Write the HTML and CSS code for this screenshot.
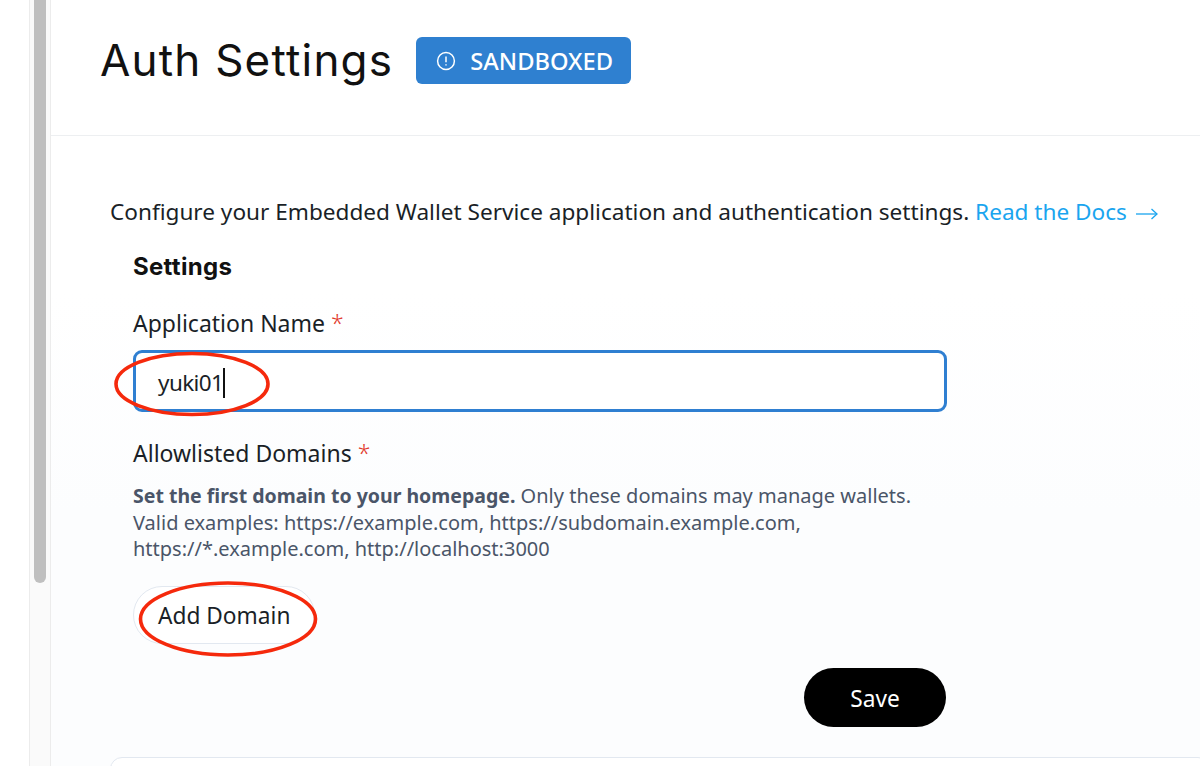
FILE: index.html
```html
<!DOCTYPE html>
<html lang="en">
<head>
<meta charset="utf-8">
<title>Auth Settings</title>
<link rel="stylesheet" href="styles.css">
</head>
<body>
<div class="app">
  <div class="gutter"></div>
  <div class="scrolltrack"><div class="thumb"></div></div>
  <main class="main">
    <header class="header">
      <h1 class="title">Auth Settings</h1>
      <span class="badge">
        <svg class="badge-icon" viewBox="0 0 20 20" fill="none" stroke="#fff" stroke-width="1.5"><circle cx="10" cy="10" r="8.4"/><path d="M10 5.4v5.8"/><path d="M10 13.2v1.4"/></svg>
        SANDBOXED
      </span>
    </header>
    <section class="content">
      <p class="intro">Configure your Embedded Wallet Service application and authentication settings. <a class="docs">Read the Docs<svg class="docs-arrow" viewBox="0 0 22 12" fill="none" stroke="#1aa5ef" stroke-width="1.3"><path d="M0 6h21"/><path d="M15.5 1l5.5 5-5.5 5"/></svg></a></p>
      <form class="form">
        <h2 class="section-title">Settings</h2>
        <label class="label">Application Name <span class="req">*</span></label>
        <div class="input"><span class="value">yuki01</span><span class="caret"></span></div>
        <label class="label label-domains">Allowlisted Domains <span class="req">*</span></label>
        <p class="help"><strong>Set the first domain to your homepage.</strong> Only these domains may manage wallets.<br>Valid examples: https://example.com, https://subdomain.example.com,<br>https://*.example.com, http://localhost:3000</p>
        <div class="add-row"><span class="btn-add">Add Domain</span></div>
        <div class="save-row"><span class="btn-save">Save</span></div>
      </form>
      <div class="next-card"></div>
    </section>
  </main>
</div>
<svg class="annot annot-name" viewBox="0 0 160 70" fill="none"><ellipse cx="80" cy="35" rx="76" ry="30.5" stroke="#f5290c" stroke-width="3.6"/></svg>
<svg class="annot annot-add" viewBox="0 0 184 78" fill="none"><ellipse cx="92" cy="39" rx="87.5" ry="36" stroke="#f5290c" stroke-width="3.6"/></svg>
</body>
</html>
```
FILE: styles.css
```css
* { box-sizing: border-box; }
html, body { margin: 0; height: 100%; overflow: hidden; background: #fff; }
body { font-family: "Noto Sans", sans-serif; color: #1a1f27; position: relative; }
.app { display: flex; height: 766px; }
.gutter { width: 29px; flex: none; background: #fff; }
.scrolltrack { width: 22px; flex: none; padding: 0 4px; background: #fafafa; border-left: 1px solid #ececec; border-right: 1px solid #ececec; }
.thumb { width: 12px; height: 583px; background: #bfbfbf; border-radius: 0 0 6px 6px; }
.main { flex: 1; min-width: 0; display: flex; flex-direction: column; }
.header { height: 136px; flex: none; display: flex; align-items: flex-start; padding: 37px 0 0 49px; border-bottom: 1px solid #edeff1; gap: 23px; }
.title { margin: 0; font-family: "Inter", sans-serif; font-weight: 400; font-size: 44px; line-height: 47px; color: #111; letter-spacing: 1.2px; }
.badge { display: flex; align-items: center; gap: 14px; height: 47px; padding: 0 18px 0 20px; background: #2f80d0; color: #fff; border-radius: 6px; font-size: 23.7px; font-weight: 500; }
.badge-icon { width: 20px; height: 20px; }
.content { flex: 1; padding: 60px 0 0 59px; background: linear-gradient(180deg, #fff 0, #fff 25%, #fcfdfe 60%, #fcfdfe 100%); overflow: hidden; }
.intro { margin: 0; font-size: 22.6px; line-height: 32px; white-space: nowrap; }
.docs { color: #1aa5ef; }
.docs-arrow { width: 22px; height: 12px; margin-left: 9px; }
.form { width: 814px; margin-left: 23px; }
.section-title { margin: 23px 0 0; font-family: "Inter", sans-serif; font-size: 24px; line-height: 32px; font-weight: 700; letter-spacing: 0.3px; color: #111; }
.label { display: block; margin-top: 24px; font-size: 23px; line-height: 32px; }
.req { color: #e23b2e; font-weight: 300; }
.input { height: 62px; margin-top: 11px; border: 3px solid #2f7fd1; border-radius: 9px; background: #fff; display: flex; align-items: center; padding: 3px 0 0 22px; font-size: 22.5px; }
.value { letter-spacing: -0.6px; }
.caret { width: 1.5px; height: 30px; background: #111; }
.label-domains { margin-top: 25px; }
.help { margin: 14px 0 0; font-size: 20px; line-height: 26.5px; color: #4a5568; white-space: nowrap; }
.help strong { font-weight: 700; font-size: 19.5px; }
.add-row { margin-top: 23px; }
.btn-add { display: inline-flex; align-items: center; height: 58px; padding: 2px 24px 0; border: 1.5px solid #e2e8f0; border-radius: 30px; font-size: 22.7px; background: #fff; }
.save-row { display: flex; justify-content: flex-end; margin-top: 24px; }
.btn-save { display: flex; align-items: center; justify-content: center; width: 142px; height: 59px; padding-top: 2px; margin-right: 1px; background: #000; color: #fff; border-radius: 30px; font-size: 22.7px; }
.next-card { width: 1100px; height: 40px; margin: 30px 0 0 0; background: #fff; border: 1.5px solid #e2e8f0; border-radius: 12px; }
.annot { position: absolute; }
.annot-name { left: 112px; top: 349px; width: 160px; height: 70px; }
.annot-add { left: 136px; top: 580px; width: 184px; height: 78px; }
```
